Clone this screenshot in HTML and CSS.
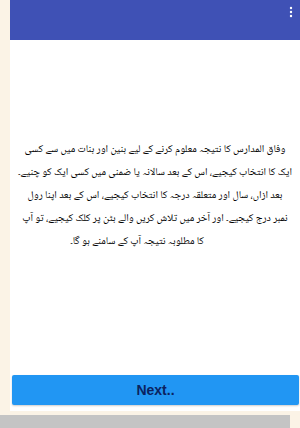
FILE: index.html
```html
<!DOCTYPE html>
<html lang="ur">

<head>
    <meta charset="UTF-8">
    <meta name="viewport" content="width=device-width, initial-scale=1.0">
    <title>Wifaq Result</title>
    <link rel="stylesheet" href="styles.css">
</head>

<body>
    <div class="screen">
        <div class="app-bar">
            <span class="menu-btn">
                <svg width="4" height="12" viewBox="0 0 4 12">
                    <circle cx="2" cy="2" r="1.2" fill="#fff" />
                    <circle cx="2" cy="6" r="1.2" fill="#fff" />
                    <circle cx="2" cy="10" r="1.2" fill="#fff" />
                </svg>
            </span>
        </div>

        <div class="content">
            <p class="intro" dir="rtl">
                <span class="line">وفاق المدارس کا نتیجہ معلوم کرنے کے لیے بنین اور بنات میں سے کسی</span>
                <span class="line">ایک کا انتخاب کیجیے، اس کے بعد سالانہ یا ضمنی میں کسی ایک کو چنیے۔</span>
                <span class="line">بعد ازاں، سال اور متعلقہ درجہ کا انتخاب کیجیے، اس کے بعد اپنا رول</span>
                <span class="line">نمبر درج کیجیے۔ اور آخر میں تلاش کریں والے بٹن پر کلک کیجیے، تو آپ</span>
                <span class="line last-line">کا مطلوبہ نتیجہ آپ کے سامنے ہو گا۔</span>
            </p>
        </div>

        <div class="footer">
            <button class="next-btn">Next..</button>
        </div>
    </div>
    <div class="nav-strip"></div>
</body>

</html>
```

FILE: styles.css
```css
body {
    margin: 0;
    padding: 0;
    background-color: #fbf3e6;
    font-family: 'Liberation Sans', Arial, sans-serif;
    width: 300px;
    height: 428px;
    overflow: hidden;
}

.screen {
    margin-left: 10px;
    height: 411px;
    background-color: #fff;
    display: flex;
    flex-direction: column;
}

.app-bar {
    height: 40px;
    background-color: #3f51b5;
    display: flex;
    justify-content: flex-end;
    align-items: flex-start;
}

.menu-btn {
    display: flex;
    padding: 6px 7px 0 0;
}

.content {
    flex: 1;
    display: flex;
    align-items: center;
    justify-content: center;
    padding: 0 6px 22px 6px;
}

.intro {
    margin: 0;
    font-family: 'Noto Naskh Arabic', 'Noto Sans Arabic', 'DejaVu Sans', sans-serif;
    font-size: 10.5px;
    line-height: 23px;
    text-align: center;
    color: #000;
    white-space: nowrap;
}

.line {
    display: block;
}

.last-line {
    padding-right: 36px;
}

.footer {
    padding: 0 1px 6px 2px;
}

.next-btn {
    display: block;
    width: 100%;
    height: 30px;
    background-color: #2196f3;
    color: #0b2260;
    border: none;
    border-radius: 2px;
    font-family: 'Liberation Sans', Arial, sans-serif;
    font-size: 14px;
    font-weight: bold;
    box-shadow: 0 1px 2px rgba(0, 0, 0, 0.2);
}

.nav-strip {
    margin-top: 4px;
    width: 290px;
    height: 13px;
    background-color: #c4c4c4;
}
```
